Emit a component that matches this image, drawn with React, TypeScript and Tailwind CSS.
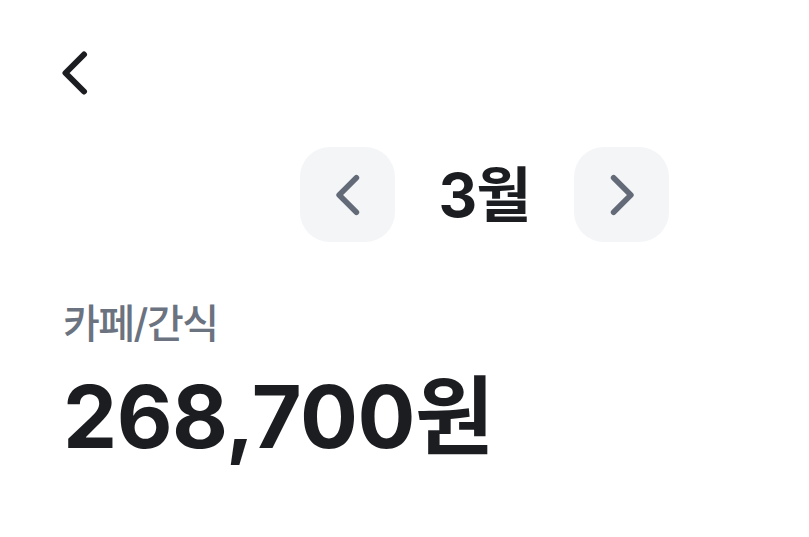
const FONT = "font-['Inter','Noto_Sans_CJK_KR',sans-serif]";

function Chevron({ dir, className }: { dir: "left" | "right"; className?: string }) {
  return (
    <svg width="30" height="44" viewBox="0 0 30 44" fill="none" className={className}>
      <path
        d={dir === "left" ? "M24 3.5 L5.5 22 L24 40.5" : "M6 3.5 L24.5 22 L6 40.5"}
        stroke="currentColor"
        strokeWidth="6"
        strokeLinecap="round"
        strokeLinejoin="round"
      />
    </svg>
  );
}

export default function App() {
  return (
    <div className={`${FONT} w-[809px] h-[537px] bg-white text-[#1c1d21] flex flex-col`}>
      <div className="pl-[60px] pt-[51px] h-[147px]">
        <Chevron dir="left" className="text-[#1c1d21]" />
      </div>

      <div className="flex items-center pl-[300px]">
        <button className="w-[95px] h-[95px] rounded-[30px] bg-[#f4f5f7] grid place-items-center">
          <Chevron dir="left" className="text-[#646b78] w-[28px] h-[42px]" />
        </button>
        <span className="w-[179px] text-center text-[60px] font-bold leading-none tracking-[-1px]">3월</span>
        <button className="w-[95px] h-[95px] rounded-[30px] bg-[#f4f5f7] grid place-items-center">
          <Chevron dir="right" className="text-[#646b78] w-[28px] h-[42px]" />
        </button>
      </div>

      <div className="pl-[63px] pt-[62px] flex flex-col">
        <span className="text-[40px] font-medium leading-none text-[#6b7280] tracking-[-1.5px]">카페/간식</span>
        <span className="mt-[30px] text-[86px] font-bold leading-none tracking-[-0.5px]">268,700원</span>
      </div>
    </div>
  );
}
